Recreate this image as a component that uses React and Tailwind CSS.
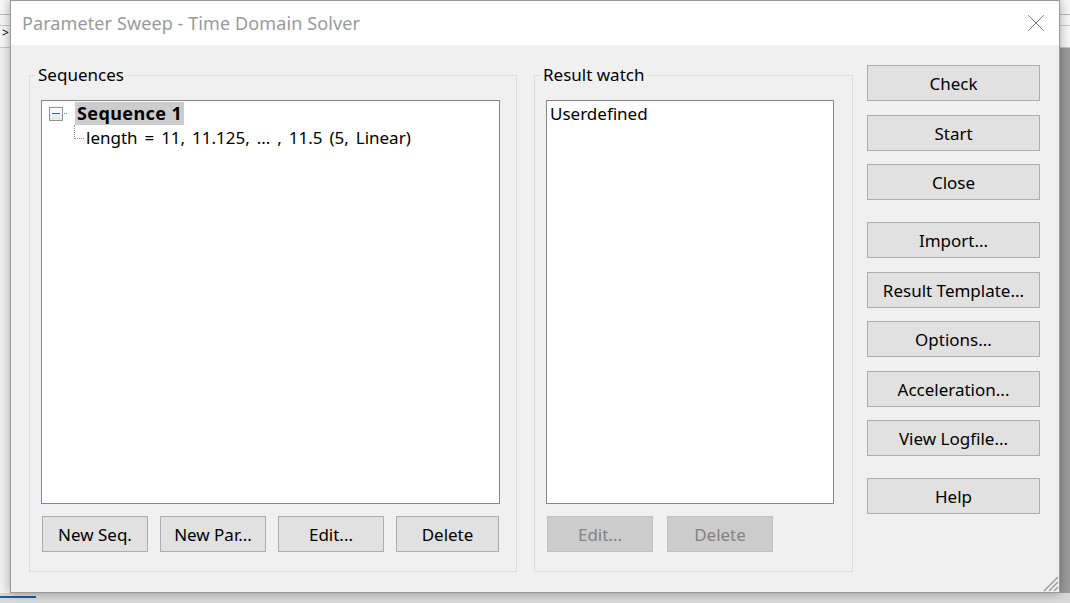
import { X } from "lucide-react";

const ui = "font-['Noto_Sans','Liberation_Sans',sans-serif]";

function Btn({ children, className = "", disabled }) {
  return (
    <button
      disabled={disabled}
      className={
        "h-[36px] border text-[17px] leading-none " +
        (disabled
          ? "bg-[#cccccc] border-[#bfbfbf] text-[#838383]"
          : "bg-[#e1e1e1] border-[#adadad] text-black") +
        " " + className
      }
    >
      {children}
    </button>
  );
}

function GroupBox({ label, className = "", children }) {
  return (
    <div className={"relative border border-[#dcdcdc] " + className}>
      <span className="absolute -top-[12px] left-[5px] px-[3px] bg-[#f0f0f0] text-[17px] leading-[22px] text-black">
        {label}
      </span>
      {children}
    </div>
  );
}

function ResizeGrip() {
  return (
    <svg width="18" height="18" viewBox="0 0 18 18" className="absolute right-0 bottom-0">
      <g strokeWidth="1.5">
        <line x1="17" y1="3" x2="3" y2="17" stroke="#9a9a9a" />
        <line x1="17" y1="8" x2="8" y2="17" stroke="#9a9a9a" />
        <line x1="17" y1="13" x2="13" y2="17" stroke="#9a9a9a" />
      </g>
    </svg>
  );
}

export default function App() {
  return (
    <div className={"relative w-[1070px] h-[603px] overflow-hidden bg-[#d6d6d6] " + ui}>
      {/* desktop behind the dialog */}
      <div className="absolute left-0 top-0 w-full h-[48px] bg-[#f7f7f7] border-b border-[#c8c8c8]">
        <div className="absolute left-0 top-[14px] w-full h-px bg-[#bdbdbd]" />
        <div className="absolute left-0 top-[25px] w-full h-px bg-[#c9c9c9]" />
        <span className="absolute left-[2px] top-[24px] text-[12px] text-black">&gt;</span>
      </div>
      <div className="absolute left-0 top-[48px] w-[10px] h-[545px] bg-[#f2f2f2]" />
      <div className="absolute right-0 top-[48px] w-[11px] h-[545px] bg-[#9c9c9c]" />
      <div className="absolute left-0 bottom-0 w-full h-[10px] bg-[#dadada]" />
      <div className="absolute left-0 bottom-[5px] w-[36px] h-[2px] bg-[#1a5f9e]" />

      {/* dialog window */}
      <div className="absolute left-[10px] top-0 w-[1050px] h-[593px] border border-[#9a9a9a] bg-[#f0f0f0] shadow-[0_0_10px_rgba(0,0,0,0.35)] flex flex-col">
        <div className="h-[44px] shrink-0 bg-white flex items-center justify-between pl-[11px] pr-[8px]">
          <span className="text-[18px] text-[#9a9a9a] tracking-[0.1px]">
            Parameter Sweep - Time Domain Solver
          </span>
          <X size={30} strokeWidth={0.8} className="text-[#777]" />
        </div>

        <div className="relative flex-1 flex items-start pl-[18px] pr-[18px]">
          <GroupBox label="Sequences" className="mt-[30px] w-[488px] h-[497px] pl-[11px] pt-[24px]">
            <div className="w-[459px] h-[404px] border border-[#828790] bg-white relative">
              <div className="flex items-center pl-[7px] pt-[1px]">
                <div className="w-[14px] h-[14px] border border-[#919191] bg-gradient-to-b from-white to-[#e4e4e4] flex items-center justify-center">
                  <div className="w-[8px] h-px bg-[#3c5fa8]" />
                </div>
                <div className="w-[3px] ml-px h-px border-t border-dotted border-[#8a8a8a]" />
                <span className="ml-[8px] px-[2px] h-[23px] leading-[23px] bg-[#cccccc] font-bold text-[18px] tracking-[0.4px] text-black">
                  Sequence 1
                </span>
              </div>
              <div className="flex items-start pl-[32px]">
                <div className="w-[10px] h-[14px] border-l border-b border-dotted border-[#8a8a8a]" />
                <span className="ml-[2px] text-[17px] leading-[28px] -mt-[1px] [word-spacing:2.5px] text-black">
                  length = 11, 11.125, ... , 11.5 (5, Linear)
                </span>
              </div>
            </div>
            <div className="flex gap-[12px] mt-[12px] ml-px">
              <Btn className="w-[106px]">New Seq.</Btn>
              <Btn className="w-[106px]">New Par...</Btn>
              <Btn className="w-[106px]">Edit...</Btn>
              <Btn className="w-[103px]">Delete</Btn>
            </div>
          </GroupBox>

          <GroupBox label="Result watch" className="mt-[30px] ml-[17px] w-[319px] h-[497px] pl-[11px] pt-[24px]">
            <div className="w-[288px] h-[404px] border border-[#828790] bg-white">
              <div className="pl-[3px] pt-[1px] text-[17px] leading-[24px] text-black">Userdefined</div>
            </div>
            <div className="flex gap-[14px] mt-[12px] ml-px">
              <Btn disabled className="w-[106px]">Edit...</Btn>
              <Btn disabled className="w-[106px]">Delete</Btn>
            </div>
          </GroupBox>

          <div className="ml-[14px] mt-[20px] w-[173px] flex flex-col">
            <Btn>Check</Btn>
            <Btn className="mt-[14px]">Start</Btn>
            <Btn className="mt-[13px]">Close</Btn>
            <Btn className="mt-[22px]">Import...</Btn>
            <Btn className="mt-[14px]">Result Template...</Btn>
            <Btn className="mt-[13px]">Options...</Btn>
            <Btn className="mt-[14px]">Acceleration...</Btn>
            <Btn className="mt-[13px]">View Logfile...</Btn>
            <Btn className="mt-[22px]">Help</Btn>
          </div>

          <ResizeGrip />
        </div>
      </div>
    </div>
  );
}
